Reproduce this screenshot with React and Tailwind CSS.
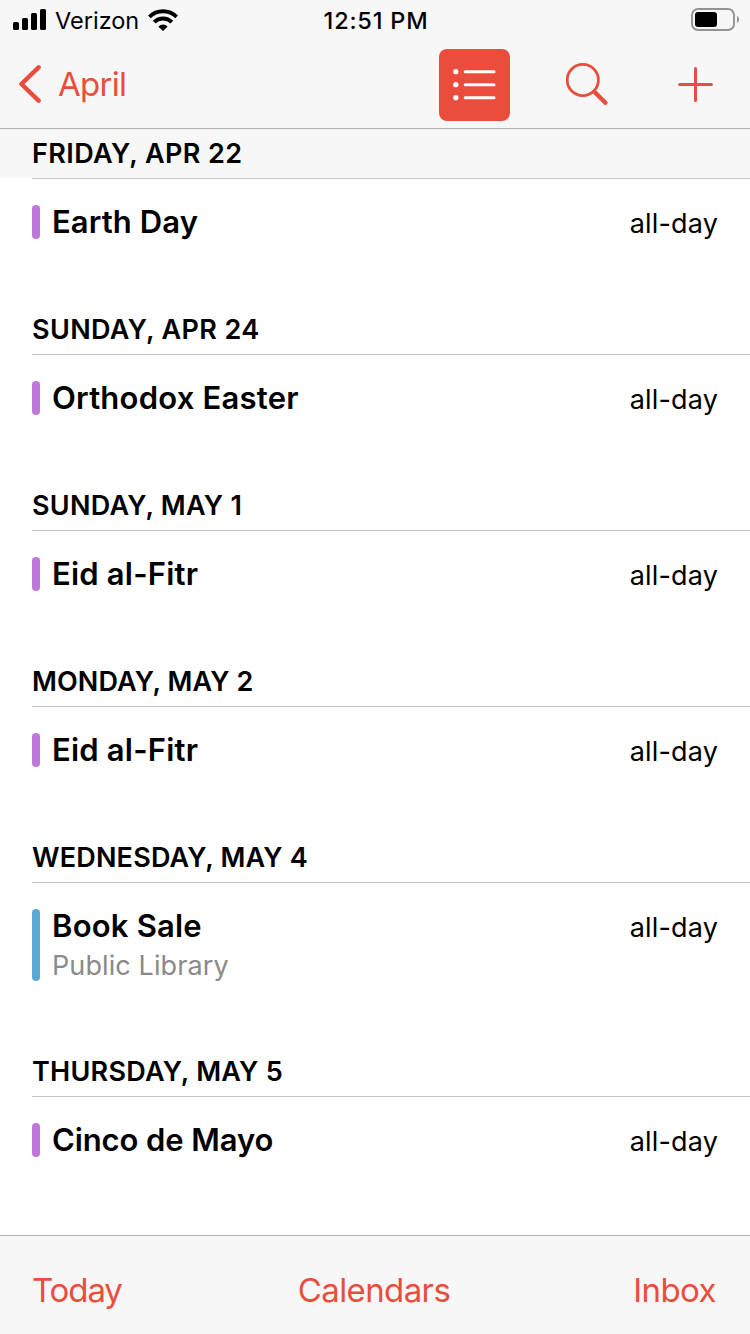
const days = [
  { day: 'FRIDAY, APR 22', dayTrack: 'tracking-[0.42px]', title: 'Earth Day', titleTrack: 'tracking-[0.1px]' },
  { day: 'SUNDAY, APR 24', dayTrack: 'tracking-[0.37px]', title: 'Orthodox Easter', titleTrack: 'tracking-[0.22px]' },
  { day: 'SUNDAY, MAY 1', dayTrack: 'tracking-[0.28px]', title: 'Eid al-Fitr', titleTrack: 'tracking-[0.2px]' },
  { day: 'MONDAY, MAY 2', dayTrack: 'tracking-[0.1px]', title: 'Eid al-Fitr', titleTrack: 'tracking-[0.2px]' },
  { day: 'WEDNESDAY, MAY 4', dayTrack: 'tracking-[0.18px]', title: 'Book Sale', titleTrack: 'tracking-[0.2px]', place: 'Public Library' },
  { day: 'THURSDAY, MAY 5', dayTrack: 'tracking-[0.25px]', title: 'Cinco de Mayo', titleTrack: 'tracking-[-0.1px]' },
];

function StatusBar() {
  return (
    <div className="grid h-10 grid-cols-3 items-center pr-[11px] pl-[13px]">
      <div className="flex items-center">
        <svg className="h-[22px] w-[34px]" viewBox="0 0 34 22">
          <rect x="0" y="13" width="6" height="8" rx="1.5" />
          <rect x="9" y="9" width="6" height="12" rx="1.5" />
          <rect x="18" y="4" width="6" height="17" rx="1.5" />
          <rect x="27" y="0" width="6" height="21" rx="1.5" />
        </svg>
        <span className="ml-2 pt-0.5 text-[23.5px] leading-[38px]">Verizon</span>
        <svg className="ml-[9px] h-[22px] w-[30px]" viewBox="0 0 30 22" fill="none" stroke="black">
          <path d="M1.4 7.9a19.2 19.2 0 0 1 27.2 0" strokeWidth="3.9" />
          <path d="M6.2 13.1a12.4 12.4 0 0 1 17.6 0" strokeWidth="3.9" />
          <path d="M10.4 17.7c2.7-2.8 6.5-2.8 9.2 0L15 22Z" fill="black" stroke="none" />
        </svg>
      </div>
      <span className="pt-0.5 text-center text-[23.5px] leading-[38px] font-medium tracking-[0.8px]">12:51 PM</span>
      <svg className="h-6 w-12 justify-self-end" viewBox="0 0 48 24">
        <rect x="1" y="1" width="42" height="21" rx="6" fill="none" stroke="#929292" strokeWidth="1.9" />
        <rect x="4" y="4" width="22" height="15" rx="3" />
        <path d="M46 8c2.7 1 2.7 6 0 7Z" fill="#929292" />
      </svg>
    </div>
  );
}

function NavBar() {
  return (
    <nav className="flex h-[88px] items-center pl-[19px] text-[#eb4d3d]">
      <button className="flex w-[420px] items-center">
        <svg className="h-[38px] w-[22px]" viewBox="0 0 22 38" fill="none" stroke="currentColor" strokeWidth="4.4" strokeLinecap="round" strokeLinejoin="round">
          <path d="M19.6 2.4 2.4 19l17.2 16.6" />
        </svg>
        <span className="ml-[17px] text-[33px] leading-[44px] tracking-[-0.7px]">April</span>
      </button>
      <button className="mt-0.5 flex h-[72px] w-[71px] items-center justify-center rounded-lg bg-[#eb4d3d] text-white">
        <svg className="h-8 w-11" viewBox="0 0 44 32" fill="none" stroke="currentColor" strokeWidth="3" strokeLinecap="round">
          <path d="M12.2 2.7H41M12.2 15.7H41M12.2 28.7H41" />
          <g fill="currentColor" stroke="none">
            <circle cx="2.8" cy="2.7" r="2.6" />
            <circle cx="2.8" cy="15.7" r="2.6" />
            <circle cx="2.8" cy="28.7" r="2.6" />
          </g>
        </svg>
      </button>
      <svg className="ml-14 h-[42px] w-[42px]" viewBox="0 0 42 42" fill="none" stroke="currentColor">
        <circle cx="16.8" cy="17" r="15.6" strokeWidth="2.8" />
        <path d="m28.4 28.7 11 11.1" strokeWidth="4.3" strokeLinecap="round" />
      </svg>
      <svg className="ml-[70px] h-9 w-[35px]" viewBox="0 0 35 36" fill="none" stroke="currentColor" strokeWidth="3" strokeLinecap="round">
        <path d="M1.6 18.5h31.8M17.5 2.5v32" />
      </svg>
    </nav>
  );
}

function Day({ item, first }) {
  return (
    <section className={item.place ? 'h-[214px]' : 'h-[176px]'}>
      <h2 className={`flex h-[49px] items-center pl-8 text-[27px] leading-none font-semibold ${first ? 'bg-[#f7f7f7]' : 'bg-white'}`}>
        <span className={item.dayTrack}>{item.day}</span>
      </h2>
      <div className="ml-8 h-px bg-[#c6c6c8]" />
      <div className="flex items-start justify-between pt-[26px] pr-8 pl-8">
        <div className="flex gap-3">
          <div className={`w-2 rounded-[4px] ${item.place ? 'h-[72px] bg-[#5ca8d5]' : 'h-[34px] bg-[#bf77dc]'}`} />
          <div>
            <div className={`text-[31px] leading-[33px] font-semibold ${item.titleTrack}`}>{item.title}</div>
            {item.place && <div className="mt-[5px] text-[27px] leading-[37px] tracking-[0.1px] text-[#8a8a8a]">{item.place}</div>}
          </div>
        </div>
        <span className="text-[27px] leading-[38px] tracking-[0.15px]">all-day</span>
      </div>
    </section>
  );
}

export default function App() {
  return (
    <div className="flex h-[1334px] w-[750px] flex-col overflow-hidden bg-white font-['Inter',sans-serif] text-black">
      <header className="h-[129px] border-b border-[#b2b2b2] bg-[#f7f7f7]">
        <StatusBar />
        <NavBar />
      </header>
      <main className="flex-1">
        {days.map((item, i) => <Day key={item.day} item={item} first={i === 0} />)}
      </main>
      <footer className="grid h-[99px] grid-cols-3 items-center border-t border-[#b2b2b2] bg-[#f7f7f7] pr-[34px] pl-8 pt-3 text-[33px] text-[#eb4d3d]">
        <span className="tracking-[-1.1px]">Today</span>
        <span className="text-center tracking-[-0.6px]">Calendars</span>
        <span className="text-right tracking-[-0.6px]">Inbox</span>
      </footer>
    </div>
  );
}
